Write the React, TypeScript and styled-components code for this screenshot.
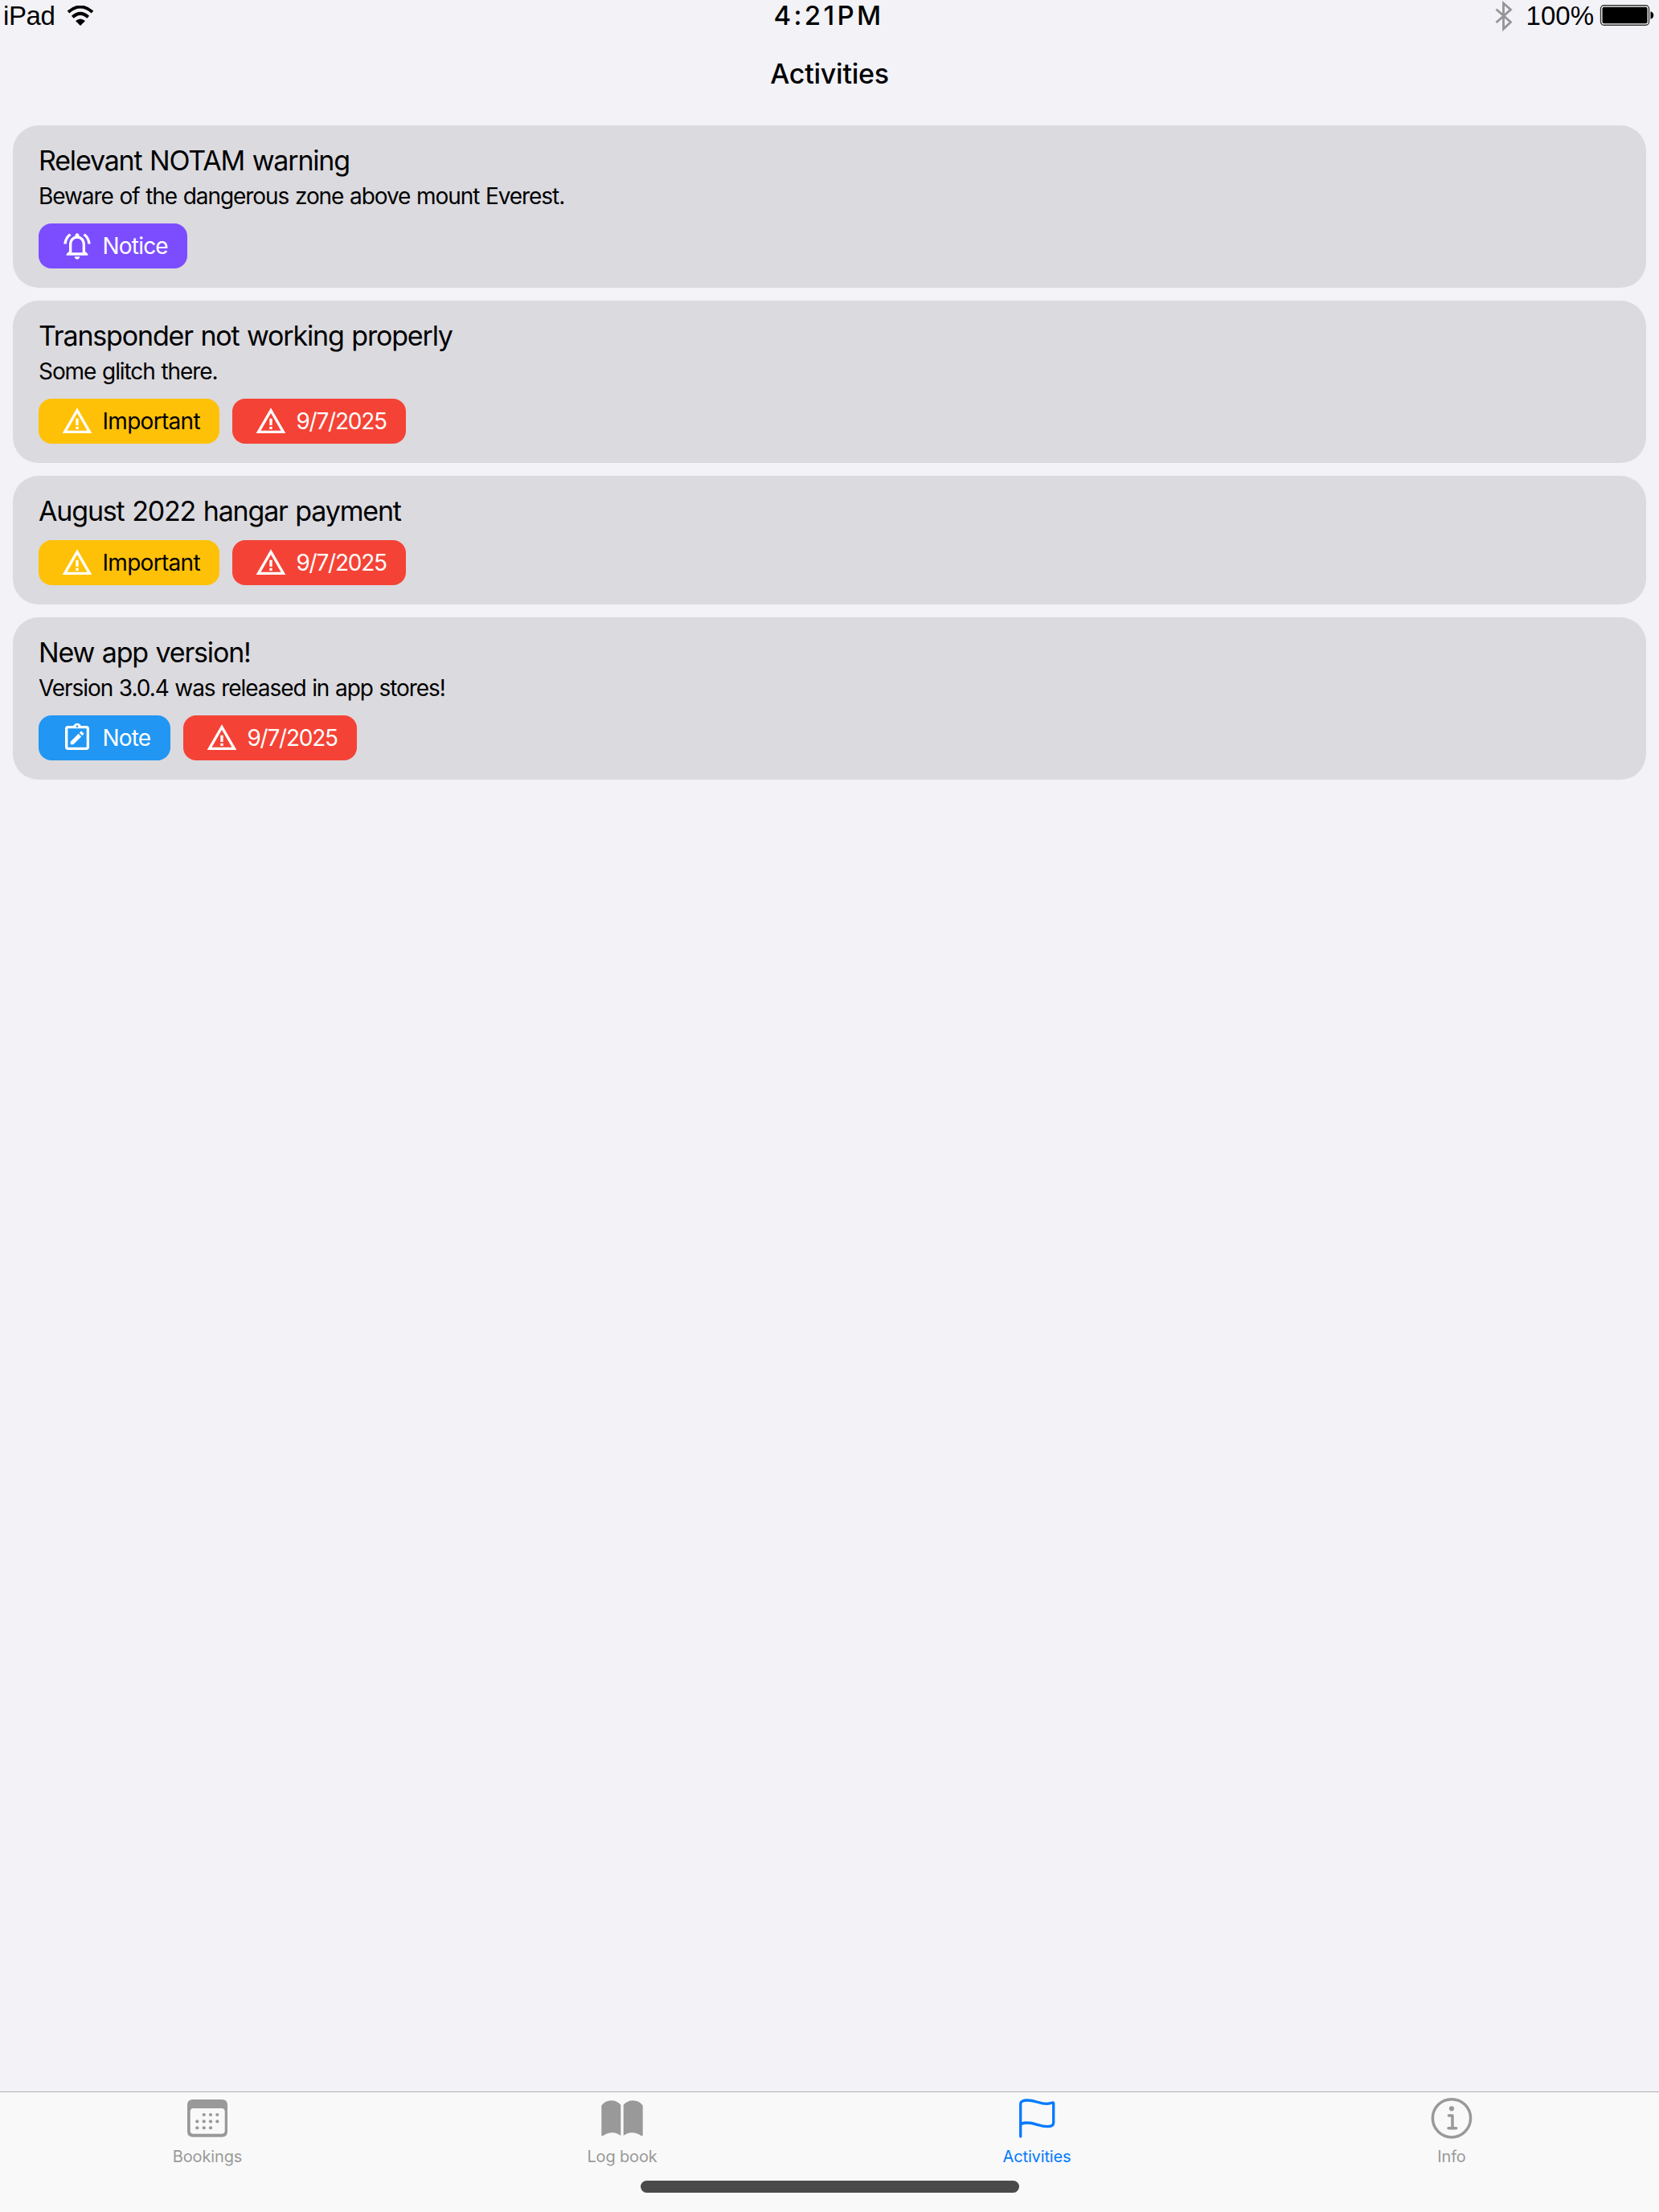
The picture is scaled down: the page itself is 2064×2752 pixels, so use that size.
import React from "react";
import styled, { createGlobalStyle } from "styled-components";
import { MdOutlineNoteAlt, MdOutlineNotificationsActive, MdWarningAmber } from "react-icons/md";

const Global = createGlobalStyle`
  * { box-sizing: border-box; }
  body { margin: 0; background: #f2f2f7; color: #000; font-family: Inter, "Liberation Sans", sans-serif; }
`;

const Screen = styled.div`
  width: 2064px;
  height: 2752px;
  display: flex;
  flex-direction: column;
  background: #f2f2f7;
`;

const StatusBar = styled.div`
  height: 40px;
  display: grid;
  grid-template-columns: 1fr auto 1fr;
  grid-template-rows: 40px;
  align-items: center;
  padding: 0 6px 0 4px;
  font-family: "Liberation Sans", Arial, sans-serif;
  font-size: 33px;
  line-height: 40px;
`;

const StatusGroup = styled.div<{ $end?: boolean }>`
  height: 40px;
  display: flex;
  align-items: center;
  justify-content: ${(p) => (p.$end ? "flex-end" : "flex-start")};
`;

const DeviceName = styled.span`
  margin-right: 15px;
  letter-spacing: -0.4px;
`;

const Clock = styled.span`
  height: 40px;
  line-height: 38px;
  font-family: Inter, sans-serif;
  font-weight: 500;
  letter-spacing: 3.3px;
  font-feature-settings: "calt" 0;
`;

const BatteryLevel = styled.span`
  margin: 0 7px 0 17px;
`;

const Header = styled.header`
  height: 100px;
  padding-top: 31px;
  text-align: center;
  font-size: 34px;
  line-height: 42px;
  font-weight: 550;
  letter-spacing: -0.25px;
`;

const List = styled.main`
  flex: 1;
  display: flex;
  flex-direction: column;
  gap: 16px;
  padding: 16px;
`;

const Card = styled.article`
  background: #dbdadf;
  border-radius: 32px;
  padding: 24px 32px;
`;

const Title = styled.h2`
  margin: 0;
  height: 40px;
  line-height: 40px;
  font-size: 34px;
  font-weight: 400;
  letter-spacing: -1.17px;
  word-spacing: 1.2px;
`;

const Detail = styled.p`
  margin: 5px 0 -1px;
  height: 38px;
  line-height: 38px;
  font-size: 28px;
  letter-spacing: -1.07px;
  word-spacing: 0.9px;
`;

const Chips = styled.div`
  display: flex;
  gap: 16px;
  margin-top: 16px;
`;

const Chip = styled.span<{ $bg: string; $fg: string; $w: number; $track: number }>`
  width: ${(p) => p.$w}px;
  height: 56px;
  display: flex;
  align-items: center;
  gap: 11.5px;
  padding-left: 28px;
  border-radius: 16px;
  background: ${(p) => p.$bg};
  color: ${(p) => p.$fg};
  font-size: 28px;
  letter-spacing: ${(p) => p.$track}px;
  white-space: nowrap;
  svg { width: 40px; height: 40px; color: #fff; flex: none; }
`;

const ChipLabel = styled.span`
  padding-bottom: 1px;
`;

const TabBar = styled.nav`
  height: 150px;
  background: #f9f9f9;
  border-top: 1px solid #b2b2b2;
  display: flex;
  flex-direction: column;
  align-items: center;
`;

const Tabs = styled.div`
  width: 100%;
  height: 110px;
  display: grid;
  grid-template-columns: repeat(4, 1fr);
`;

const Tab = styled.div<{ $active?: boolean }>`
  display: flex;
  flex-direction: column;
  align-items: center;
  color: ${(p) => (p.$active ? "#007aff" : "#999")};
  font-size: 20px;
  font-weight: 400;
  letter-spacing: -0.15px;
  line-height: 24px;
  padding-top: 4px;
  gap: 6px;
  svg { width: 58px; height: 58px; }
`;

const HomeIndicator = styled.div`
  width: 471px;
  height: 15px;
  border-radius: 8px;
  background: #4a4a4a;
`;

const WifiIcon = () => (
  <svg width="34" height="26" viewBox="0 0 34 26" fill="none" stroke="#000">
    <path d="M2 8Q17 -5 32 8" strokeWidth="4" />
    <path d="M7.300 14.300Q17 5.500 26.700 14.300" strokeWidth="4" />
    <path d="M11 19Q17 14 23 19L17 25Z" fill="#000" stroke="none" />
  </svg>
);

const BluetoothIcon = () => (
  <svg width="22" height="42" viewBox="0 0 22 42" fill="none" stroke="#959595" strokeWidth="2.8">
    <path d="M1.500 12.500L19.500 28.500L10.500 37V5L19.500 13L1.500 29" />
  </svg>
);

const BatteryIcon = () => (
  <svg width="68" height="28" viewBox="0 0 68 28">
    <rect x="1.500" y="0.800" width="60" height="24.500" rx="4" fill="#fff" stroke="#333" strokeWidth="1.400" />
    <rect x="3.500" y="2.800" width="56" height="20.500" rx="2" fill="#000" />
    <path d="M63.500 8.300C68.500 9.300 68.500 16.800 63.500 17.800Z" fill="#000" />
  </svg>
);

const CalendarIcon = () => (
  <svg viewBox="0 0 58 58" fill="currentColor">
    <path fillRule="evenodd" d="M11 5H47Q54 5 54 12V44.700Q54 51.700 47 51.700H11Q4 51.700 4 44.700V12Q4 5 11 5ZM11.700 16Q7.700 16 7.700 20V43.700Q7.700 47.700 11.700 47.700H46.700Q50.700 47.700 50.700 43.700V20Q50.700 16 46.700 16Z" />
    {[[24.7, 24], [33, 24], [41.3, 24], [16.3, 32.3], [24.7, 32.3], [33, 32.3], [41.3, 32.3], [16.3, 40.3], [24.7, 40.3], [33, 40.3]].map(([x, y]) => (
      <circle key={`${x}-${y}`} cx={x} cy={y} r="2.1" />
    ))}
  </svg>
);

const BookIcon = () => (
  <svg viewBox="0 0 58 58" fill="currentColor">
    <path d="M3.300 12.500Q8 6.300 15.500 6.300Q22.500 6.300 27.300 11.800V50Q22.500 46.200 17 46.200Q10.500 46.200 6 49.800Q3.300 51.500 3.300 49Z" />
    <path d="M54.700 12.500Q50 6.300 42.500 6.300Q35.500 6.300 30.700 11.800V50Q35.500 46.200 41 46.200Q47.500 46.200 52 49.800Q54.700 51.500 54.700 49Z" />
  </svg>
);

const FlagIcon = () => (
  <svg viewBox="0 0 58 58" fill="none" stroke="currentColor" strokeWidth="3.300" strokeLinecap="round" strokeLinejoin="round">
    <path d="M8.700 51V10.500Q8.700 6 17 6C27 6 32 10.400 41 10.400C46 10.400 49.700 7.800 49.700 9.500V34Q49.700 38.700 42 38.700C32 38.700 27 34 17 34Q11 34 8.700 36" />
  </svg>
);

const InfoIcon = () => (
  <svg viewBox="0 0 58 58" fill="none" stroke="currentColor" strokeWidth="3.500" strokeLinecap="round" strokeLinejoin="round">
    <circle cx="29" cy="28.300" r="23.600" />
    <circle cx="29" cy="16.300" r="3.100" fill="currentColor" stroke="none" />
    <path d="M25.500 25H30V40.700M25 40.700H34.700" />
  </svg>
);

type Tag = { kind: "notice" | "important" | "note" | "date"; label: string };
const kinds = {
  notice: { bg: "#7c4dff", fg: "#fff", w: 185, track: -0.8, Icon: MdOutlineNotificationsActive },
  important: { bg: "#ffc107", fg: "#000", w: 225, track: -0.7, Icon: MdWarningAmber },
  note: { bg: "#2196f3", fg: "#fff", w: 164, track: -0.8, Icon: MdOutlineNoteAlt },
  date: { bg: "#f44336", fg: "#fff", w: 216, track: -1.25, Icon: MdWarningAmber },
};

const due: Tag = { kind: "date", label: "9/7/2025" };
const activities: { title: string; detail?: string; tags: Tag[] }[] = [
  { title: "Relevant NOTAM warning", detail: "Beware of the dangerous zone above mount Everest.", tags: [{ kind: "notice", label: "Notice" }] },
  { title: "Transponder not working properly", detail: "Some glitch there.", tags: [{ kind: "important", label: "Important" }, due] },
  { title: "August 2022 hangar payment", tags: [{ kind: "important", label: "Important" }, due] },
  { title: "New app version!", detail: "Version 3.0.4 was released in app stores!", tags: [{ kind: "note", label: "Note" }, due] },
];

const tabs = [
  { label: "Bookings", Icon: CalendarIcon },
  { label: "Log book", Icon: BookIcon },
  { label: "Activities", Icon: FlagIcon, active: true },
  { label: "Info", Icon: InfoIcon },
];

export default function App() {
  return (
    <>
      <Global />
      <Screen>
        <StatusBar>
          <StatusGroup>
            <DeviceName>iPad</DeviceName>
            <WifiIcon />
          </StatusGroup>
          <Clock>4:21PM</Clock>
          <StatusGroup $end>
            <BluetoothIcon />
            <BatteryLevel>100%</BatteryLevel>
            <BatteryIcon />
          </StatusGroup>
        </StatusBar>
        <Header>Activities</Header>
        <List>
          {activities.map((a) => (
            <Card key={a.title}>
              <Title>{a.title}</Title>
              {a.detail && <Detail>{a.detail}</Detail>}
              <Chips>
                {a.tags.map((t) => {
                  const k = kinds[t.kind];
                  return (
                    <Chip key={t.label} $bg={k.bg} $fg={k.fg} $w={k.w} $track={k.track}>
                      <k.Icon />
                      <ChipLabel>{t.label}</ChipLabel>
                    </Chip>
                  );
                })}
              </Chips>
            </Card>
          ))}
        </List>
        <TabBar>
          <Tabs>
            {tabs.map(({ label, Icon, active }) => (
              <Tab key={label} $active={active}>
                <Icon />
                <span>{label}</span>
              </Tab>
            ))}
          </Tabs>
          <HomeIndicator />
        </TabBar>
      </Screen>
    </>
  );
}
